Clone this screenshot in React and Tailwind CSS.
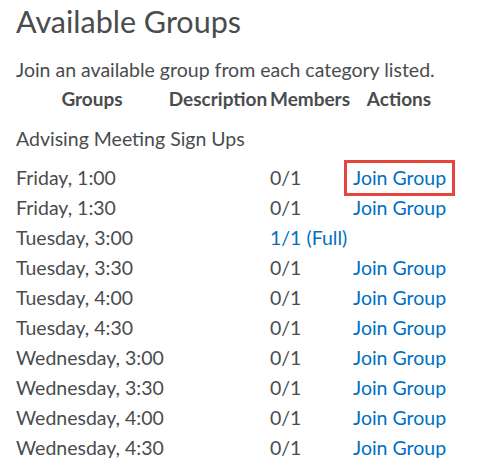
const rows = [
  { name: 'Friday, 1:00', members: '0/1', open: true, highlight: true },
  { name: 'Friday, 1:30', members: '0/1', open: true },
  { name: 'Tuesday, 3:00', members: '1/1 (Full)', open: false },
  { name: 'Tuesday, 3:30', members: '0/1', open: true },
  { name: 'Tuesday, 4:00', members: '0/1', open: true },
  { name: 'Tuesday, 4:30', members: '0/1', open: true },
  { name: 'Wednesday, 3:00', members: '0/1', open: true },
  { name: 'Wednesday, 3:30', members: '0/1', open: true },
  { name: 'Wednesday, 4:00', members: '0/1', open: true },
  { name: 'Wednesday, 4:30', members: '0/1', open: true },
];

export default function App() {
  return (
    <div className="w-[493px] h-[466px] overflow-hidden bg-white pl-4 pt-[3px] font-['Lato',sans-serif] text-[#494c4e]">
      {/** TITLE */}
      <h1 className="text-[30.5px] leading-[36px] font-normal">Available Groups</h1>
      <p className="mt-[19px] text-[19.5px] leading-[24px]">
        Join an available group from each category listed.
      </p>

      {/** TABLE HEADER */}
      <div className="mt-[5px] grid grid-cols-[152px_100px_84px_94px] h-[24px] text-[19px] leading-[24px] font-bold text-center whitespace-nowrap">
        <div>Groups</div>
        <div>Description</div>
        <div>Members</div>
        <div>Actions</div>
      </div>

      <div className="mt-[13px] text-[19.5px] leading-[30px]">Advising Meeting Sign Ups</div>

      {/** ROWS */}
      <div className="mt-[9px]">
        {rows.map((row) => (
          <div
            key={row.name}
            className="grid grid-cols-[152px_100px_84px_94px] h-[30px] text-[19.5px] leading-[30px] whitespace-nowrap"
          >
            <div>{row.name}</div>
            <div></div>
            <div className={`pl-[2px] ${row.open ? '' : 'text-[#006fbf]'}`}>
              {row.members}
            </div>
            <div className="relative pl-px">
              {row.open && <a className="text-[#006fbf] cursor-pointer">Join Group</a>}
              {row.highlight && (
                <div className="absolute left-[-8px] top-[-3px] w-[111px] h-[36px] border-[3px] border-[#e4463d]" />
              )}
            </div>
          </div>
        ))}
      </div>
    </div>
  );
}
